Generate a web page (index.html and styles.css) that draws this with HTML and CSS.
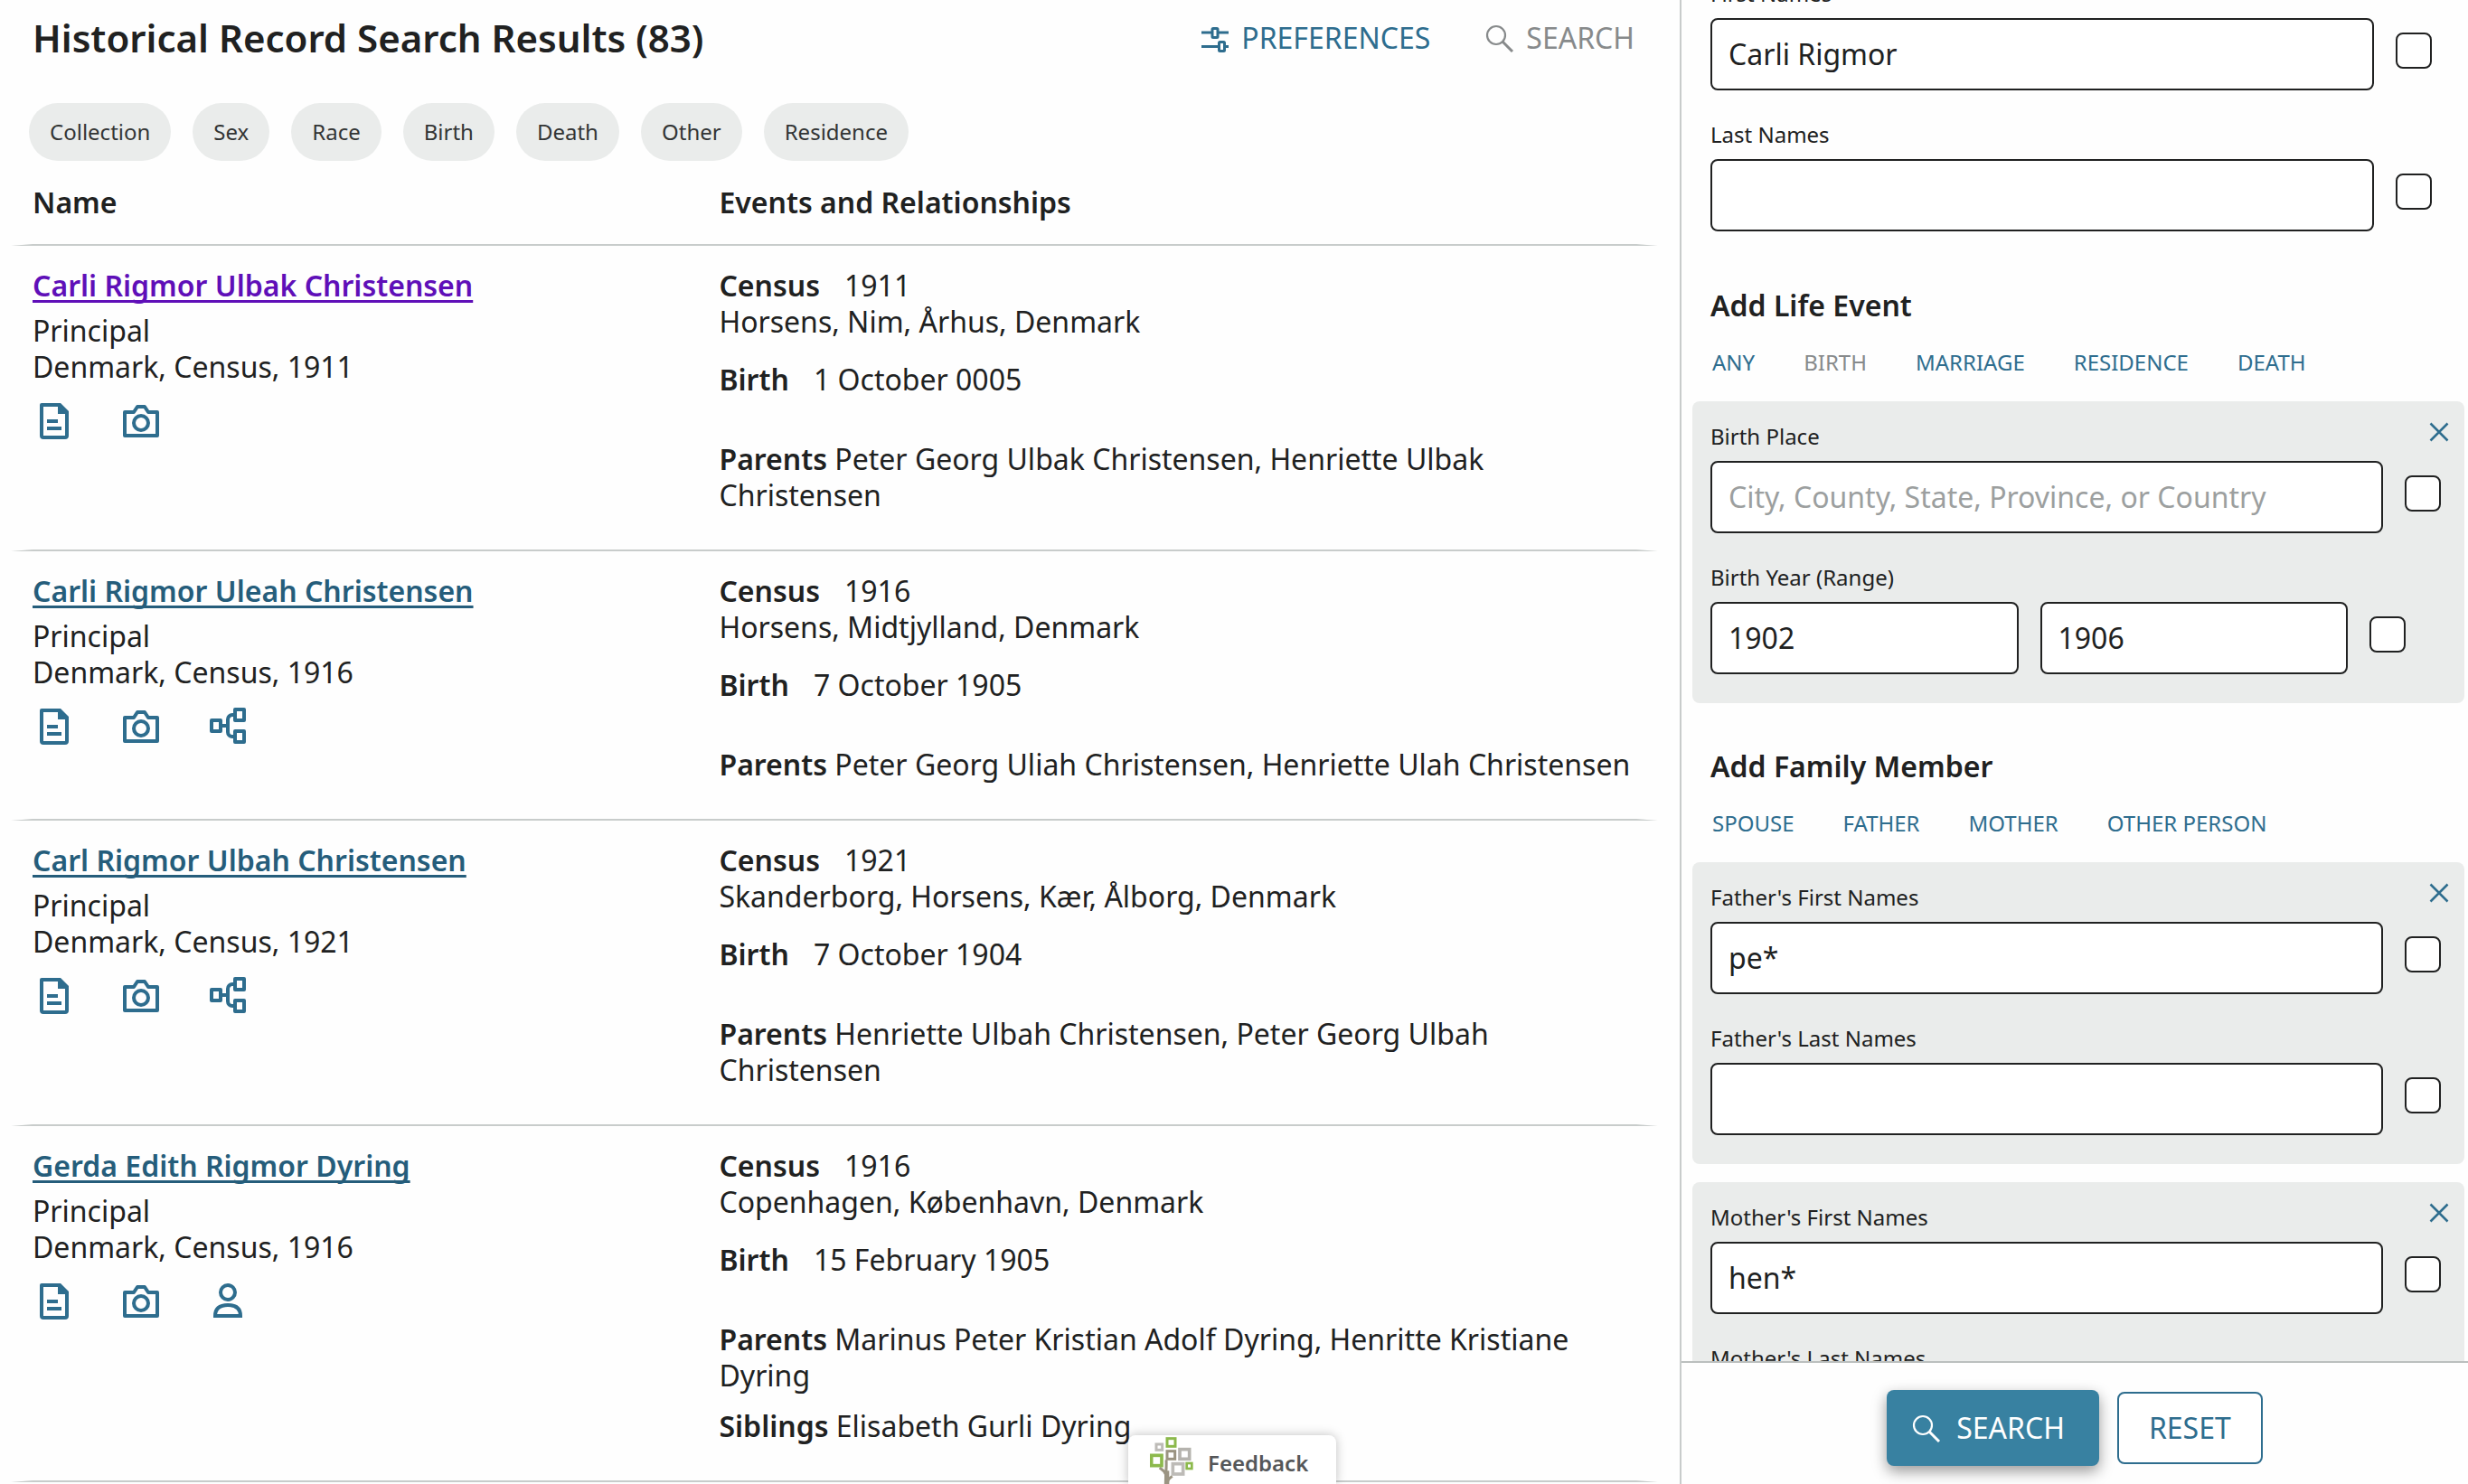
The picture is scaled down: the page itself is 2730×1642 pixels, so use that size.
FILE: index.html
```html
<!DOCTYPE html>
<html lang="en">
<head>
    <meta charset="utf-8">
    <title>Historical Record Search Results</title>
    <link rel="stylesheet" href="styles.css">
</head>
<body>
    <!-- Icon sprites -->
    <svg class="sprites" aria-hidden="true">
        <symbol id="icon-search" viewBox="0 0 32 32">
            <circle cx="12" cy="13" r="10" fill="none" stroke="currentColor" stroke-width="2.2"/>
            <path d="M19 20L30 31" fill="none" stroke="currentColor" stroke-width="3"/>
        </symbol>
        <symbol id="icon-sliders" viewBox="0 0 32 32">
            <path d="M1 10h11M20 10h11M1 25.500h18M27 25.500h4" stroke="currentColor" stroke-width="3" fill="none"/>
            <rect x="13" y="5.500" width="6" height="10" rx="1" fill="none" stroke="currentColor" stroke-width="3"/>
            <rect x="20.500" y="20.500" width="6" height="10" rx="1" fill="none" stroke="currentColor" stroke-width="3"/>
        </symbol>
        <symbol id="icon-record" viewBox="0 0 24 24">
            <path d="M5 3h9.500L19 7.500V20a1 1 0 0 1-1 1H6a1 1 0 0 1-1-1z" fill="none" stroke="currentColor" stroke-width="2" stroke-linejoin="round"/>
            <path d="M14 2h1.500L20 6.500V8h-6z" fill="currentColor"/>
            <path d="M8 12h6M8 16h8" stroke="currentColor" stroke-width="2"/>
        </symbol>
        <symbol id="icon-camera" viewBox="0 0 24 24">
            <path d="M3 7h5l2-3h4l2 3h5v13H3z" fill="none" stroke="currentColor" stroke-width="2" stroke-linejoin="round"/>
            <circle cx="12" cy="13" r="4" fill="none" stroke="currentColor" stroke-width="2"/>
        </symbol>
        <symbol id="icon-tree" viewBox="0 0 24 24">
            <g fill="none" stroke="currentColor" stroke-width="2" stroke-linejoin="round">
                <rect x="3" y="8.500" width="5" height="6"/>
                <rect x="16" y="2.500" width="5" height="6"/>
                <rect x="16" y="14.500" width="5" height="6"/>
                <path d="M8 11.500h4M16 5.500h-1.500a2.500 2.500 0 0 0-2.500 2.500v7a2.500 2.500 0 0 0 2.500 2.500H16"/>
            </g>
        </symbol>
        <symbol id="icon-person" viewBox="0 0 24 24">
            <circle cx="12" cy="7" r="4" fill="none" stroke="currentColor" stroke-width="2"/>
            <path d="M5 20c0-4 2.500-6 7-6s7 2 7 6z" fill="none" stroke="currentColor" stroke-width="2"/>
        </symbol>
        <symbol id="icon-close" viewBox="0 0 24 24">
            <path d="M2.500 2.500l19 19M21.500 2.500l-19 19" fill="none" stroke="currentColor" stroke-width="2.500"/>
        </symbol>
    </svg>

    <main class="results">
        <header class="results-header">
            <h1>Historical Record Search Results (83)</h1>
            <button type="button" class="link-button"><svg class="icon-small"><use href="#icon-sliders"/></svg>PREFERENCES</button>
            <button type="button" class="link-button muted"><svg class="icon-small"><use href="#icon-search"/></svg>SEARCH</button>
        </header>

        <div class="filters">
            <button type="button" class="chip">Collection</button>
            <button type="button" class="chip">Sex</button>
            <button type="button" class="chip">Race</button>
            <button type="button" class="chip">Birth</button>
            <button type="button" class="chip">Death</button>
            <button type="button" class="chip">Other</button>
            <button type="button" class="chip">Residence</button>
        </div>

        <table class="records">
            <thead>
                <tr>
                    <th>Name</th>
                    <th>Events and Relationships</th>
                </tr>
            </thead>
            <tbody>
                <tr>
                    <td>
                        <a class="person visited" href="#record-1">Carli Rigmor Ulbak Christensen</a>
                        <p>Principal<br>Denmark, Census, 1911</p>
                        <div class="actions">
                            <a href="#record-1" aria-label="Record"><svg class="icon"><use href="#icon-record"/></svg></a>
                            <a href="#image-1" aria-label="Image"><svg class="icon"><use href="#icon-camera"/></svg></a>
                        </div>
                    </td>
                    <td>
                        <p><b class="event">Census</b>1911<br>Horsens, Nim, Århus, Denmark</p>
                        <p class="birth"><b class="event">Birth</b>1 October 0005</p>
                        <p class="parents"><b>Parents</b> Peter Georg Ulbak Christensen, Henriette Ulbak Christensen</p>
                    </td>
                </tr>
                <tr>
                    <td>
                        <a class="person" href="#record-2">Carli Rigmor Uleah Christensen</a>
                        <p>Principal<br>Denmark, Census, 1916</p>
                        <div class="actions">
                            <a href="#record-2" aria-label="Record"><svg class="icon"><use href="#icon-record"/></svg></a>
                            <a href="#image-2" aria-label="Image"><svg class="icon"><use href="#icon-camera"/></svg></a>
                            <a href="#tree-2" aria-label="Tree"><svg class="icon"><use href="#icon-tree"/></svg></a>
                        </div>
                    </td>
                    <td>
                        <p><b class="event">Census</b>1916<br>Horsens, Midtjylland, Denmark</p>
                        <p class="birth"><b class="event">Birth</b>7 October 1905</p>
                        <p class="parents"><b>Parents</b> Peter Georg Uliah Christensen, Henriette Ulah Christensen</p>
                    </td>
                </tr>
                <tr>
                    <td>
                        <a class="person" href="#record-3">Carl Rigmor Ulbah Christensen</a>
                        <p>Principal<br>Denmark, Census, 1921</p>
                        <div class="actions">
                            <a href="#record-3" aria-label="Record"><svg class="icon"><use href="#icon-record"/></svg></a>
                            <a href="#image-3" aria-label="Image"><svg class="icon"><use href="#icon-camera"/></svg></a>
                            <a href="#tree-3" aria-label="Tree"><svg class="icon"><use href="#icon-tree"/></svg></a>
                        </div>
                    </td>
                    <td>
                        <p><b class="event">Census</b>1921<br>Skanderborg, Horsens, Kær, Ålborg, Denmark</p>
                        <p class="birth"><b class="event">Birth</b>7 October 1904</p>
                        <p class="parents"><b>Parents</b> Henriette Ulbah Christensen, Peter Georg Ulbah Christensen</p>
                    </td>
                </tr>
                <tr>
                    <td>
                        <a class="person" href="#record-4">Gerda Edith Rigmor Dyring</a>
                        <p>Principal<br>Denmark, Census, 1916</p>
                        <div class="actions">
                            <a href="#record-4" aria-label="Record"><svg class="icon"><use href="#icon-record"/></svg></a>
                            <a href="#image-4" aria-label="Image"><svg class="icon"><use href="#icon-camera"/></svg></a>
                            <a href="#person-4" aria-label="Person"><svg class="icon"><use href="#icon-person"/></svg></a>
                        </div>
                    </td>
                    <td>
                        <p><b class="event">Census</b>1916<br>Copenhagen, København, Denmark</p>
                        <p class="birth"><b class="event">Birth</b>15 February 1905</p>
                        <p class="parents"><b>Parents</b> Marinus Peter Kristian Adolf Dyring, Henritte Kristiane Dyring</p>
                        <p class="siblings"><b>Siblings</b> Elisabeth Gurli Dyring</p>
                    </td>
                </tr>
            </tbody>
        </table>

        <button type="button" class="feedback">
            <svg class="logo" viewBox="0 0 144 156" aria-hidden="true">
                <path d="M54 76c2 24-2 44-2 80M52 124C50 112 40 108 32 102M58 156c0-16 6-18 16-26" fill="none" stroke="#9b9482" stroke-width="9"/>
                <path d="M56 112v44" stroke="#9b9482" stroke-width="16"/>
                <g fill="#fff" stroke-width="9">
                    <rect x="57" y="5" width="27" height="26" stroke="#8cb94c"/>
                    <rect x="21" y="24" width="20" height="19" stroke="#bdbbb7"/>
                    <rect x="5" y="61" width="34" height="34" stroke="#8cb94c" stroke-width="11"/>
                    <rect x="57" y="47" width="26" height="26" stroke="#9b9482"/>
                    <rect x="99" y="41" width="32" height="32" stroke="#b5b3ae" stroke-width="11"/>
                    <rect x="76" y="89" width="34" height="34" stroke="#bdbbb7" stroke-width="11"/>
                    <rect x="122" y="87" width="17" height="18" stroke="#8cb94c" stroke-width="8"/>
                </g>
            </svg>
            <span>Feedback</span>
        </button>
    </main>

    <aside class="refine">
        <form>
            <div class="refine-fields">
                <section class="names">
                    <div class="field">
                        <label for="first-names">First Names</label>
                        <div class="field-row">
                            <input type="text" id="first-names" value="Carli Rigmor">
                            <input type="checkbox" aria-label="Exact first names">
                        </div>
                    </div>
                    <div class="field">
                        <label for="last-names">Last Names</label>
                        <div class="field-row">
                            <input type="text" id="last-names">
                            <input type="checkbox" aria-label="Exact last names">
                        </div>
                    </div>
                </section>

                <h2>Add Life Event</h2>
                <div class="tabs">
                    <button type="button">ANY</button>
                    <button type="button" class="muted">BIRTH</button>
                    <button type="button">MARRIAGE</button>
                    <button type="button">RESIDENCE</button>
                    <button type="button">DEATH</button>
                </div>
                <section class="panel">
                    <button type="button" class="close" aria-label="Remove birth"><svg><use href="#icon-close"/></svg></button>
                    <div class="field">
                        <label for="birth-place">Birth Place</label>
                        <div class="field-row">
                            <input type="text" id="birth-place" placeholder="City, County, State, Province, or Country">
                            <input type="checkbox" aria-label="Exact birth place">
                        </div>
                    </div>
                    <div class="field">
                        <label for="birth-from">Birth Year (Range)</label>
                        <div class="field-row years">
                            <input type="text" id="birth-from" value="1902">
                            <input type="text" value="1906" aria-label="Birth year to">
                            <input type="checkbox" aria-label="Exact birth year">
                        </div>
                    </div>
                </section>

                <h2>Add Family Member</h2>
                <div class="tabs">
                    <button type="button">SPOUSE</button>
                    <button type="button">FATHER</button>
                    <button type="button">MOTHER</button>
                    <button type="button">OTHER PERSON</button>
                </div>
                <section class="panel">
                    <button type="button" class="close" aria-label="Remove father"><svg><use href="#icon-close"/></svg></button>
                    <div class="field">
                        <label for="father-first">Father's First Names</label>
                        <div class="field-row">
                            <input type="text" id="father-first" value="pe*">
                            <input type="checkbox" aria-label="Exact father's first names">
                        </div>
                    </div>
                    <div class="field">
                        <label for="father-last">Father's Last Names</label>
                        <div class="field-row">
                            <input type="text" id="father-last">
                            <input type="checkbox" aria-label="Exact father's last names">
                        </div>
                    </div>
                </section>
                <section class="panel">
                    <button type="button" class="close" aria-label="Remove mother"><svg><use href="#icon-close"/></svg></button>
                    <div class="field">
                        <label for="mother-first">Mother's First Names</label>
                        <div class="field-row">
                            <input type="text" id="mother-first" value="hen*">
                            <input type="checkbox" aria-label="Exact mother's first names">
                        </div>
                    </div>
                    <div class="field">
                        <label for="mother-last">Mother's Last Names</label>
                        <div class="field-row">
                            <input type="text" id="mother-last">
                            <input type="checkbox" aria-label="Exact mother's last names">
                        </div>
                    </div>
                </section>
            </div>

            <footer class="refine-footer">
                <button type="submit" class="submit"><svg class="icon-small"><use href="#icon-search"/></svg>SEARCH</button>
                <button type="reset" class="reset">RESET</button>
            </footer>
        </form>
    </aside>
</body>
</html>
```
FILE: styles.css
```css
* { box-sizing: border-box; }
body { display: flex; height: 100vh; margin: 0; overflow: hidden; background: #fefefe; color: #202121; font: 32px/40px "Noto Sans", sans-serif; }
h1, h2, p { margin: 0; }
button { padding: 0; border: 0; background: none; color: #2e6d8e; font: inherit; cursor: pointer; }
b, th { font-weight: 600; }
.sprites { position: absolute; width: 0; height: 0; }
.icon { display: block; width: 48px; height: 48px; }
.icon-small { width: 32px; height: 32px; }
.muted { color: #878a8b; }

/* Results */
.results { position: relative; flex: 1; min-width: 0; padding: 18px 24px 0 12px; overflow: hidden; }
.results-header { display: flex; align-items: center; gap: 61px; padding: 0 26px 0 24px; }
.results-header h1 { flex: 1; font-size: 42px; line-height: 48px; font-weight: 600; }
.link-button { display: flex; align-items: center; gap: 13px; line-height: 48px; }
.filters { display: flex; gap: 24px; padding: 48px 20px 0; }
.chip { height: 64px; padding: 0 23px; border-radius: 32px; background: #eaeceb; color: #333535; font-size: 24px; }

.records { width: 100%; margin-top: 26px; border-spacing: 0; table-layout: fixed; }
.records th { padding: 0 0 26px; text-align: left; }
.records th:first-child { width: 43%; }
.records td { padding: 24px 0 40px; vertical-align: top; }
.records th, .records td { border: solid #c8cccb; border-width: 0 0 2px; }
/* the transparent side borders taper the ends of the rule */
.records th:first-child, .records td:first-child { border-left: 24px solid transparent; }
.records th:last-child, .records td:last-child { border-right: 24px solid transparent; }
.person { display: block; width: fit-content; margin-bottom: 10px; color: #255d7b; font-weight: 600; text-decoration-thickness: 3px; text-underline-offset: 4px; text-decoration-skip-ink: none; }
.visited { color: #5f0fb8; }
.actions { display: flex; gap: 48px; margin-top: 16px; }
.actions a { color: #2e6d8e; }
.event { margin-right: 27px; }
.birth { margin-top: 24px; }
.parents { margin-top: 48px; }
.siblings { margin-top: 16px; }

.feedback { position: absolute; right: 380px; bottom: 0; display: flex; align-items: center; gap: 16px; width: 230px; height: 54px; padding: 2px 0 0 24px; border-radius: 8px 8px 0 0; background: #fff; box-shadow: 0 0 12px rgba(0,0,0,0.25); color: #555759; font-size: 24px; font-weight: 600; }
.feedback span { padding-top: 6px; }
.logo { width: 48px; height: 52px; }

/* Refine search */
.refine { width: 872px; max-width: 50%; border-left: 2px solid #c8cccb; }
.refine form { display: flex; flex-direction: column; height: 100%; }
.refine-fields { flex: 1; min-height: 0; padding: 0 4px 0 12px; overflow: hidden; }
.names { margin-top: -26px; padding: 0 36px 12px 20px; }
.refine h2 { margin: 48px 0 24px 20px; font-size: 32px; line-height: 44px; font-weight: 600; }
.tabs { display: flex; gap: 54px; margin: 0 0 26px 22px; }
.tabs button { font-size: 24px; line-height: 34px; }
.tabs .muted { color: #878a8b; }
.panel { position: relative; padding: 20px 26px 32px 20px; border-radius: 8px; background: #eaeceb; }
.panel + .panel { margin-top: 20px; }
.close { position: absolute; top: 22px; right: 16px; width: 24px; height: 24px; }
.close svg { display: block; width: 24px; height: 24px; }
.field + .field { margin-top: 30px; }
.field label { display: block; margin-bottom: 8px; font-size: 24px; line-height: 38px; }
.field-row { display: flex; gap: 24px; }
.years { padding-right: 39px; }
input[type="text"] { flex: 1; min-width: 0; height: 80px; padding: 0 18px 2px; border: 2px solid #202121; border-radius: 8px; background: #fff; color: #202121; font: inherit; }
input[type="text"]::placeholder { color: #9c9f9f; }
input[type="checkbox"] { appearance: none; width: 40px; height: 40px; margin: 16px 0 0; border: 2px solid #202121; border-radius: 8px; background: #fff; }
.refine-footer { display: flex; justify-content: center; align-items: center; gap: 20px; padding: 30px 0 20px; border-top: 2px solid #bbbfbe; }
.submit { display: flex; align-items: center; gap: 17px; height: 84px; padding: 0 38px 0 28px; border-radius: 8px; background: #3881a1; box-shadow: 0 6px 16px rgba(0,0,0,0.4); color: #fff; }
.reset { height: 80px; padding: 0 33px; border: 2px solid #2e6d8e; border-radius: 8px; background: #fff; }
```
